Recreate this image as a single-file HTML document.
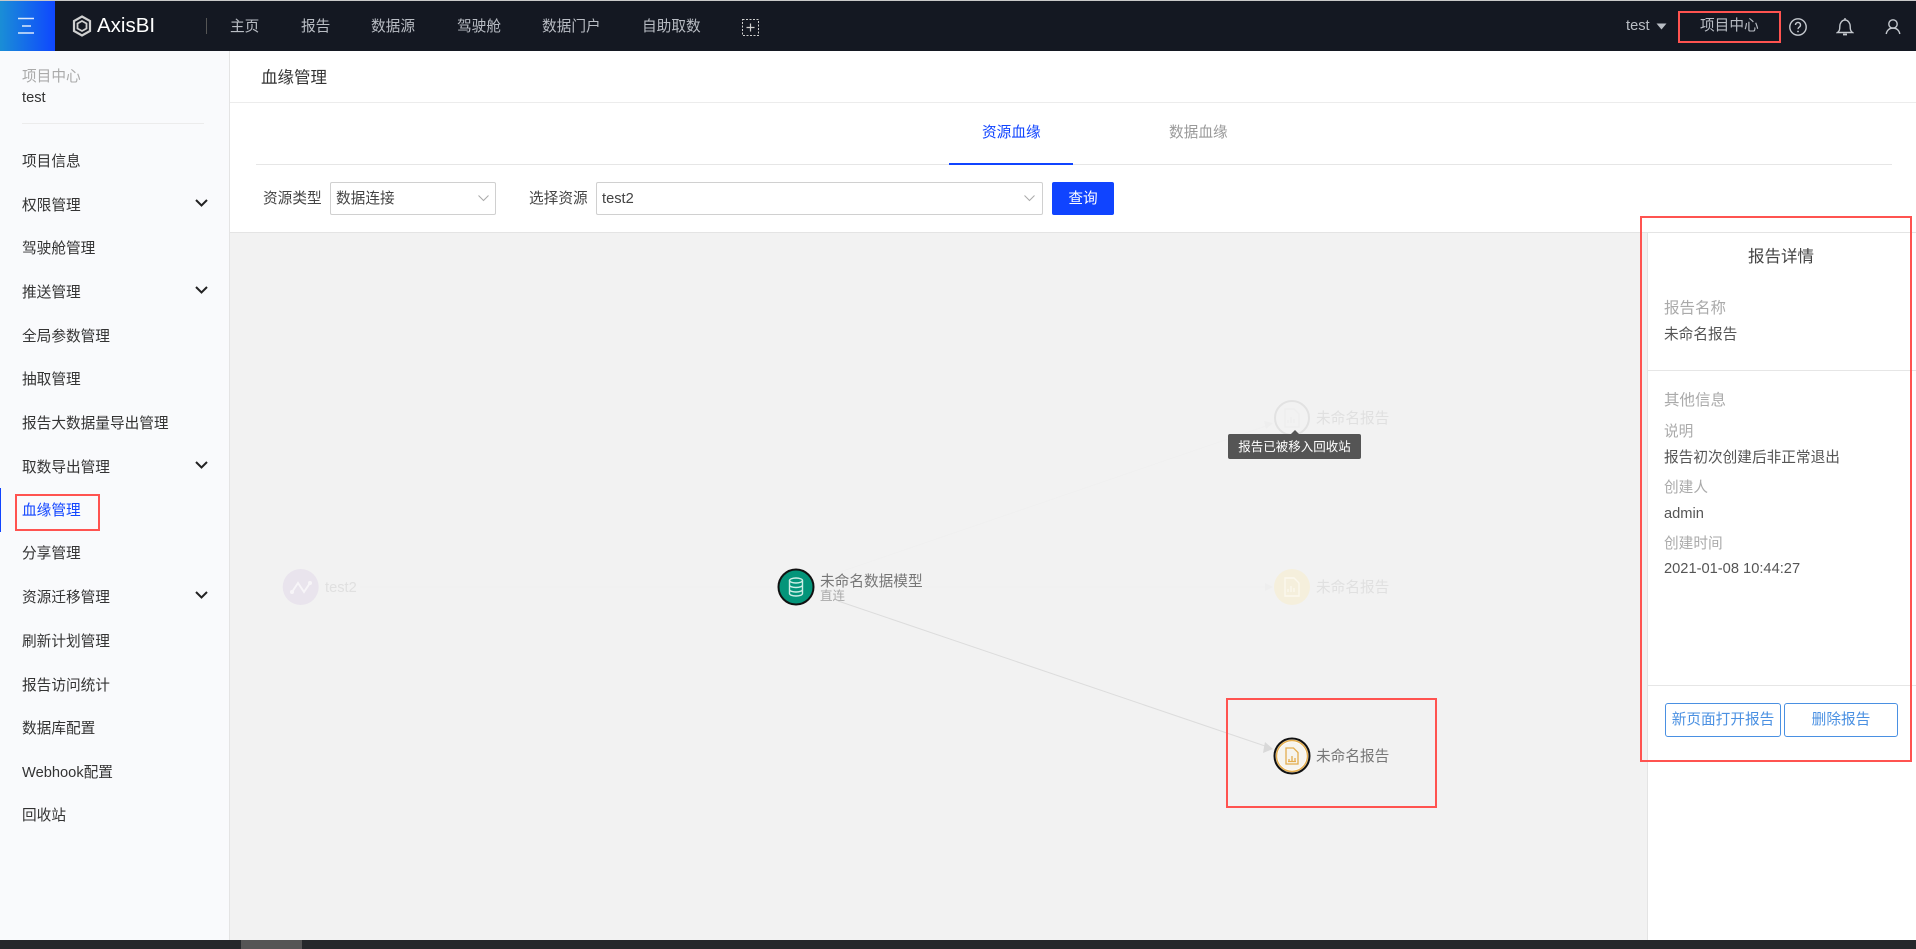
<!DOCTYPE html>
<html lang="zh-CN">
<head>
<meta charset="utf-8">
<title>AxisBI 血缘管理</title>
<style>
html,body{margin:0;padding:0;width:1916px;height:949px;overflow:hidden;background:#fff}
body{font-family:"Liberation Sans","Noto Sans CJK SC",sans-serif;font-size:14.67px;color:#333;position:relative}
.a{position:absolute}
.t{position:absolute;white-space:nowrap;line-height:20px;font-size:14.67px}
.nav{color:#b9bdc4}
.side{left:22px;color:#333}
.red{position:absolute;border:2px solid #ff5350;box-sizing:border-box;z-index:5}
.gray{color:#aaa}
.val{color:#555}
.sel{position:absolute;top:182px;height:33px;border:1px solid #d0d0d0;border-radius:2px;box-sizing:border-box;background:#fff}
.btn{position:absolute;top:703px;height:34px;border:1px solid #4a90e2;border-radius:3px;box-sizing:border-box;color:#4a90e2;text-align:center;line-height:32px;font-size:14.67px;background:#fff;white-space:nowrap}
</style>
</head>
<body>
<!-- top bar -->
<div class="a" style="left:0;top:0;width:1916px;height:1px;background:#c9c9c9"></div>
<div class="a" style="left:0;top:1px;width:1916px;height:50px;background:#141822"></div>
<div class="a" style="left:0;top:1px;width:55px;height:50px;background:linear-gradient(90deg,#1a8ed6,#0f47ff)"></div>
<svg class="a" style="left:17px;top:17px" width="18" height="18" viewBox="0 0 18 18"><path d="M1 1.500h16M5 9h9M1 16h16" stroke="#fff" stroke-width="1.500" fill="none" opacity=".85"/></svg>
<svg class="a" style="left:72px;top:15px" width="20" height="22" viewBox="0 0 20 22"><path d="M10 1.500 18 6v10l-8 4.500L2 16V6z" fill="none" stroke="#d0d0d0" stroke-width="2.200"/><path d="M10 6l4.500 2.500v5L10 16l-4.500-2.500v-5z" fill="none" stroke="#d0d0d0" stroke-width="1.800"/></svg>
<div class="t" style="left:97px;top:16px;font-size:20.500px;color:#fff">AxisBI</div>
<div class="a" style="left:206px;top:18px;width:1px;height:16px;background:#555"></div>
<div class="t nav" style="left:230px;top:17px">主页</div>
<div class="t nav" style="left:301px;top:17px">报告</div>
<div class="t nav" style="left:371px;top:17px">数据源</div>
<div class="t nav" style="left:457px;top:17px">驾驶舱</div>
<div class="t nav" style="left:542px;top:17px">数据门户</div>
<div class="t nav" style="left:642px;top:17px">自助取数</div>
<svg class="a" style="left:742px;top:19px" width="17" height="17" viewBox="0 0 17 17"><rect x=".5" y=".5" width="16" height="16" fill="none" stroke="#cfcfcf" stroke-dasharray="2 1.500"/><path d="M4.500 8.500h8M8.500 4.500v8" stroke="#cfcfcf" stroke-width="1.200"/></svg>
<div class="t nav" style="left:1626px;top:16px;color:#b9bdc4">test</div>
<svg class="a" style="left:1656px;top:23px" width="11" height="7" viewBox="0 0 11 7"><path d="M.5.500h10L5.500 6.500z" fill="#b9bdc4"/></svg>
<div class="red" style="left:1678px;top:11px;width:103px;height:32px"></div>
<div class="t nav" style="left:1700px;top:16px">项目中心</div>
<svg class="a" style="left:1788px;top:17px" width="20" height="20" viewBox="0 0 20 20"><circle cx="10" cy="10" r="8.200" fill="none" stroke="#c4c8ce" stroke-width="1.400"/><path d="M7.500 8a2.500 2.500 0 1 1 3.800 2.100c-.9.600-1.300 1-1.300 2" fill="none" stroke="#c4c8ce" stroke-width="1.400"/><circle cx="10" cy="14.500" r=".9" fill="#c4c8ce"/></svg>
<svg class="a" style="left:1836px;top:17px" width="18" height="20" viewBox="0 0 18 20"><path d="M1.500 15.500c2-1.500 2.300-3 2.300-6 0-3.300 2.200-6.500 5.200-6.500s5.200 3.200 5.200 6.500c0 3 .3 4.500 2.300 6z" fill="none" stroke="#c4c8ce" stroke-width="1.400"/><path d="M7 17.500h4" stroke="#c4c8ce" stroke-width="1.800"/><path d="M9 1v2" stroke="#c4c8ce" stroke-width="1.400"/></svg>
<svg class="a" style="left:1885px;top:18px" width="16" height="17" viewBox="0 0 16 17"><circle cx="8" cy="6" r="4.200" fill="none" stroke="#c4c8ce" stroke-width="1.400"/><path d="M1.200 16c.6-3.600 3.200-6 6.800-6s6.200 2.400 6.800 6" fill="none" stroke="#c4c8ce" stroke-width="1.400"/></svg>

<!-- sidebar -->
<div class="a" style="left:0;top:51px;width:229px;height:889px;background:#f9fafc;border-right:1px solid #e4e4e4"></div>
<div class="t side" style="top:67px;color:#aaa">项目中心</div>
<div class="t side" style="top:88px">test</div>
<div class="a" style="left:22px;top:123px;width:182px;height:1px;background:#ececec"></div>
<div class="t side" style="top:152px">项目信息</div>
<div class="t side" style="top:196px">权限管理</div>
<div class="t side" style="top:239px">驾驶舱管理</div>
<div class="t side" style="top:283px">推送管理</div>
<div class="t side" style="top:327px">全局参数管理</div>
<div class="t side" style="top:370px">抽取管理</div>
<div class="t side" style="top:414px">报告大数据量导出管理</div>
<div class="t side" style="top:458px">取数导出管理</div>
<div class="t side" style="top:501px;color:#1044ff">血缘管理</div>
<div class="t side" style="top:544px">分享管理</div>
<div class="t side" style="top:588px">资源迁移管理</div>
<div class="t side" style="top:632px">刷新计划管理</div>
<div class="t side" style="top:676px">报告访问统计</div>
<div class="t side" style="top:719px">数据库配置</div>
<div class="t side" style="top:763px">Webhook配置</div>
<div class="t side" style="top:806px">回收站</div>
<svg class="a" style="left:195px;top:199px" width="13" height="8" viewBox="0 0 13 8"><path d="M1 1l5.500 5.500L12 1" fill="none" stroke="#222" stroke-width="2"/></svg>
<svg class="a" style="left:195px;top:286px" width="13" height="8" viewBox="0 0 13 8"><path d="M1 1l5.500 5.500L12 1" fill="none" stroke="#222" stroke-width="2"/></svg>
<svg class="a" style="left:195px;top:461px" width="13" height="8" viewBox="0 0 13 8"><path d="M1 1l5.500 5.500L12 1" fill="none" stroke="#222" stroke-width="2"/></svg>
<svg class="a" style="left:195px;top:591px" width="13" height="8" viewBox="0 0 13 8"><path d="M1 1l5.500 5.500L12 1" fill="none" stroke="#222" stroke-width="2"/></svg>
<div class="a" style="left:0;top:488px;width:1px;height:44px;background:#1044ff"></div>
<div class="red" style="left:15px;top:494px;width:85px;height:37px"></div>

<!-- page head -->
<div class="t" style="left:261px;top:68px;font-size:16.500px;color:#333">血缘管理</div>
<div class="a" style="left:230px;top:102px;width:1686px;height:1px;background:#ececec"></div>
<div class="t" style="left:982px;top:123px;color:#1044ff">资源血缘</div>
<div class="t" style="left:1169px;top:123px;color:#999">数据血缘</div>
<div class="a" style="left:256px;top:164px;width:1636px;height:1px;background:#e6e6e6"></div>
<div class="a" style="left:949px;top:163px;width:124px;height:2px;background:#1044ff"></div>

<!-- filter -->
<div class="t" style="left:263px;top:189px;color:#444">资源类型</div>
<div class="sel" style="left:330px;width:166px"></div>
<div class="t" style="left:336px;top:189px;color:#444">数据连接</div>
<svg class="a" style="left:478px;top:195px" width="11" height="7" viewBox="0 0 11 7"><path d="M.5.500l5 5 5-5" fill="none" stroke="#aaa"/></svg>
<div class="t" style="left:529px;top:189px;color:#444">选择资源</div>
<div class="sel" style="left:596px;width:447px"></div>
<div class="t" style="left:602px;top:189px;color:#444">test2</div>
<svg class="a" style="left:1024px;top:195px" width="11" height="7" viewBox="0 0 11 7"><path d="M.5.500l5 5 5-5" fill="none" stroke="#aaa"/></svg>
<div class="a" style="left:1052px;top:182px;width:62px;height:33px;background:#1044ff;border-radius:2px;color:#fff;text-align:center;line-height:35px">查询</div>

<!-- canvas -->
<div class="a" style="left:230px;top:232px;width:1686px;height:1px;background:#e4e4e4"></div>
<div class="a" style="left:230px;top:233px;width:1417px;height:707px;background:#f2f2f2"></div>
<svg class="a" style="left:230px;top:233px" width="1417" height="707" viewBox="230 233 1417 707">
  <path d="M360 587H775" stroke="#f0f0f0" fill="none"/>
  <path d="M840 572L1266 426" stroke="#f0f0f0" fill="none"/>
  <path d="M1273 423l-9-2 2 8z" fill="#eeeeee"/>
  <path d="M925 587H1266" stroke="#f0f0f0" fill="none"/>
  <path d="M1273 587l-8-4v8z" fill="#eeeeee"/>
  <path d="M838 601L1268 747" stroke="#dcdcdc" fill="none"/>
  <path d="M1273 749l-8-7-1 5-1 6z" fill="#d9d9d9"/>
  <!-- test2 -->
  <circle cx="300.700" cy="587" r="18" fill="#e9e4ed"/>
  <path d="M292 592l6-9 6 9 6-9" fill="none" stroke="#f7f5f8" stroke-width="2"/>
  <circle cx="292" cy="592" r="2" fill="#f7f5f8"/><circle cx="310" cy="583" r="2" fill="#f7f5f8"/>
  <!-- model -->
  <circle cx="796" cy="587" r="17.500" fill="#04957a" stroke="#111" stroke-width="2"/>
  <ellipse cx="796" cy="580.500" rx="6.500" ry="2.500" fill="none" stroke="#cfeee6" stroke-width="1.400"/>
  <path d="M789.500 580.500v13c0 1.500 3 2.500 6.500 2.500s6.500-1 6.500-2.500v-13M789.500 585c0 1.500 3 2.500 6.500 2.500s6.500-1 6.500-2.500M789.500 589.500c0 1.500 3 2.500 6.500 2.500s6.500-1 6.500-2.500" fill="none" stroke="#cfeee6" stroke-width="1.400"/>
  <!-- top faded report -->
  <circle cx="1292" cy="418" r="17" fill="#f2f2f2" stroke="#e2e2e2" stroke-width="2"/>
  <path d="M1285 409h9l5 5v13h-14z" fill="none" stroke="#eeeeee" stroke-width="1.400"/>
  <path d="M1288 423v-3M1291 423v-6M1294 423v-4" stroke="#eeeeee" stroke-width="1.400"/>
  <!-- mid faded report -->
  <circle cx="1292" cy="587" r="18" fill="#f5efdc"/>
  <path d="M1285 578h9l5 5v13h-14z" fill="none" stroke="#fbf8ee" stroke-width="1.400"/>
  <path d="M1288 592v-3M1291 592v-6M1294 592v-4" stroke="#fbf8ee" stroke-width="1.400"/>
  <!-- active report -->
  <circle cx="1292" cy="756" r="17.500" fill="#fff" stroke="#111" stroke-width="2"/>
  <circle cx="1292" cy="756" r="15.500" fill="#fff" stroke="#e4ae4f" stroke-width="1.500"/>
  <circle cx="1292" cy="756" r="14" fill="#f6f4ee"/>
  <path d="M1286 748h7.500l4.500 4.500V764h-12z" fill="none" stroke="#e4ae4f" stroke-width="1.300"/>
  <path d="M1288 761.500h8M1289 761v-2M1292 761v-5M1295 761v-3" stroke="#e4ae4f" stroke-width="1.300" fill="none"/>
</svg>
<div class="t" style="left:325px;top:578px;color:#e0e0e0">test2</div>
<div class="t" style="left:820px;top:572px;color:#777">未命名数据模型</div>
<div class="t" style="left:820px;top:586px;color:#aaa;font-size:12.500px">直连</div>
<div class="t" style="left:1316px;top:409px;color:#e0e0e0">未命名报告</div>
<div class="t" style="left:1316px;top:578px;color:#e0e0e0">未命名报告</div>
<div class="t" style="left:1316px;top:747px;color:#777">未命名报告</div>
<div class="a" style="left:1290px;top:430px;width:0;height:0;border-left:5px solid transparent;border-right:5px solid transparent;border-bottom:5px solid #555"></div>
<div class="a" style="left:1228px;top:434px;width:133px;height:25px;background:#555;border-radius:2px;color:#fff;text-align:center;line-height:26px;font-size:12.500px;white-space:nowrap">报告已被移入回收站</div>

<!-- red frame around report node -->
<div class="red" style="left:1226px;top:698px;width:211px;height:110px"></div>

<!-- right panel -->
<div class="a" style="left:1647px;top:233px;width:1px;height:707px;background:#e4e4e4"></div>
<div class="t" style="left:1748px;top:247px;font-size:16.500px;color:#444">报告详情</div>
<div class="t gray" style="left:1664px;top:299px;font-size:15.500px">报告名称</div>
<div class="t val" style="left:1664px;top:325px">未命名报告</div>
<div class="a" style="left:1648px;top:370px;width:268px;height:1px;background:#e6e6e6"></div>
<div class="t gray" style="left:1664px;top:391px;font-size:15.500px">其他信息</div>
<div class="t gray" style="left:1664px;top:422px">说明</div>
<div class="t val" style="left:1664px;top:448px">报告初次创建后非正常退出</div>
<div class="t gray" style="left:1664px;top:478px">创建人</div>
<div class="t val" style="left:1664px;top:504px">admin</div>
<div class="t gray" style="left:1664px;top:534px">创建时间</div>
<div class="t val" style="left:1664px;top:559px">2021-01-08 10:44:27</div>
<div class="a" style="left:1648px;top:685px;width:268px;height:1px;background:#e6e6e6"></div>
<div class="btn" style="left:1665px;width:116px">新页面打开报告</div>
<div class="btn" style="left:1784px;width:114px">删除报告</div>
<div class="red" style="left:1640px;top:216px;width:272px;height:546px"></div>

<!-- bottom bar -->
<div class="a" style="left:0;top:940px;width:1916px;height:9px;background:#25282b;overflow:hidden">
  <div class="a" style="left:241px;top:0;width:61px;height:9px;background:#555"></div>
  <div class="t" style="left:1853px;top:6px;color:#fff;font-size:14px">10:45</div>
</div>
</body>
</html>
